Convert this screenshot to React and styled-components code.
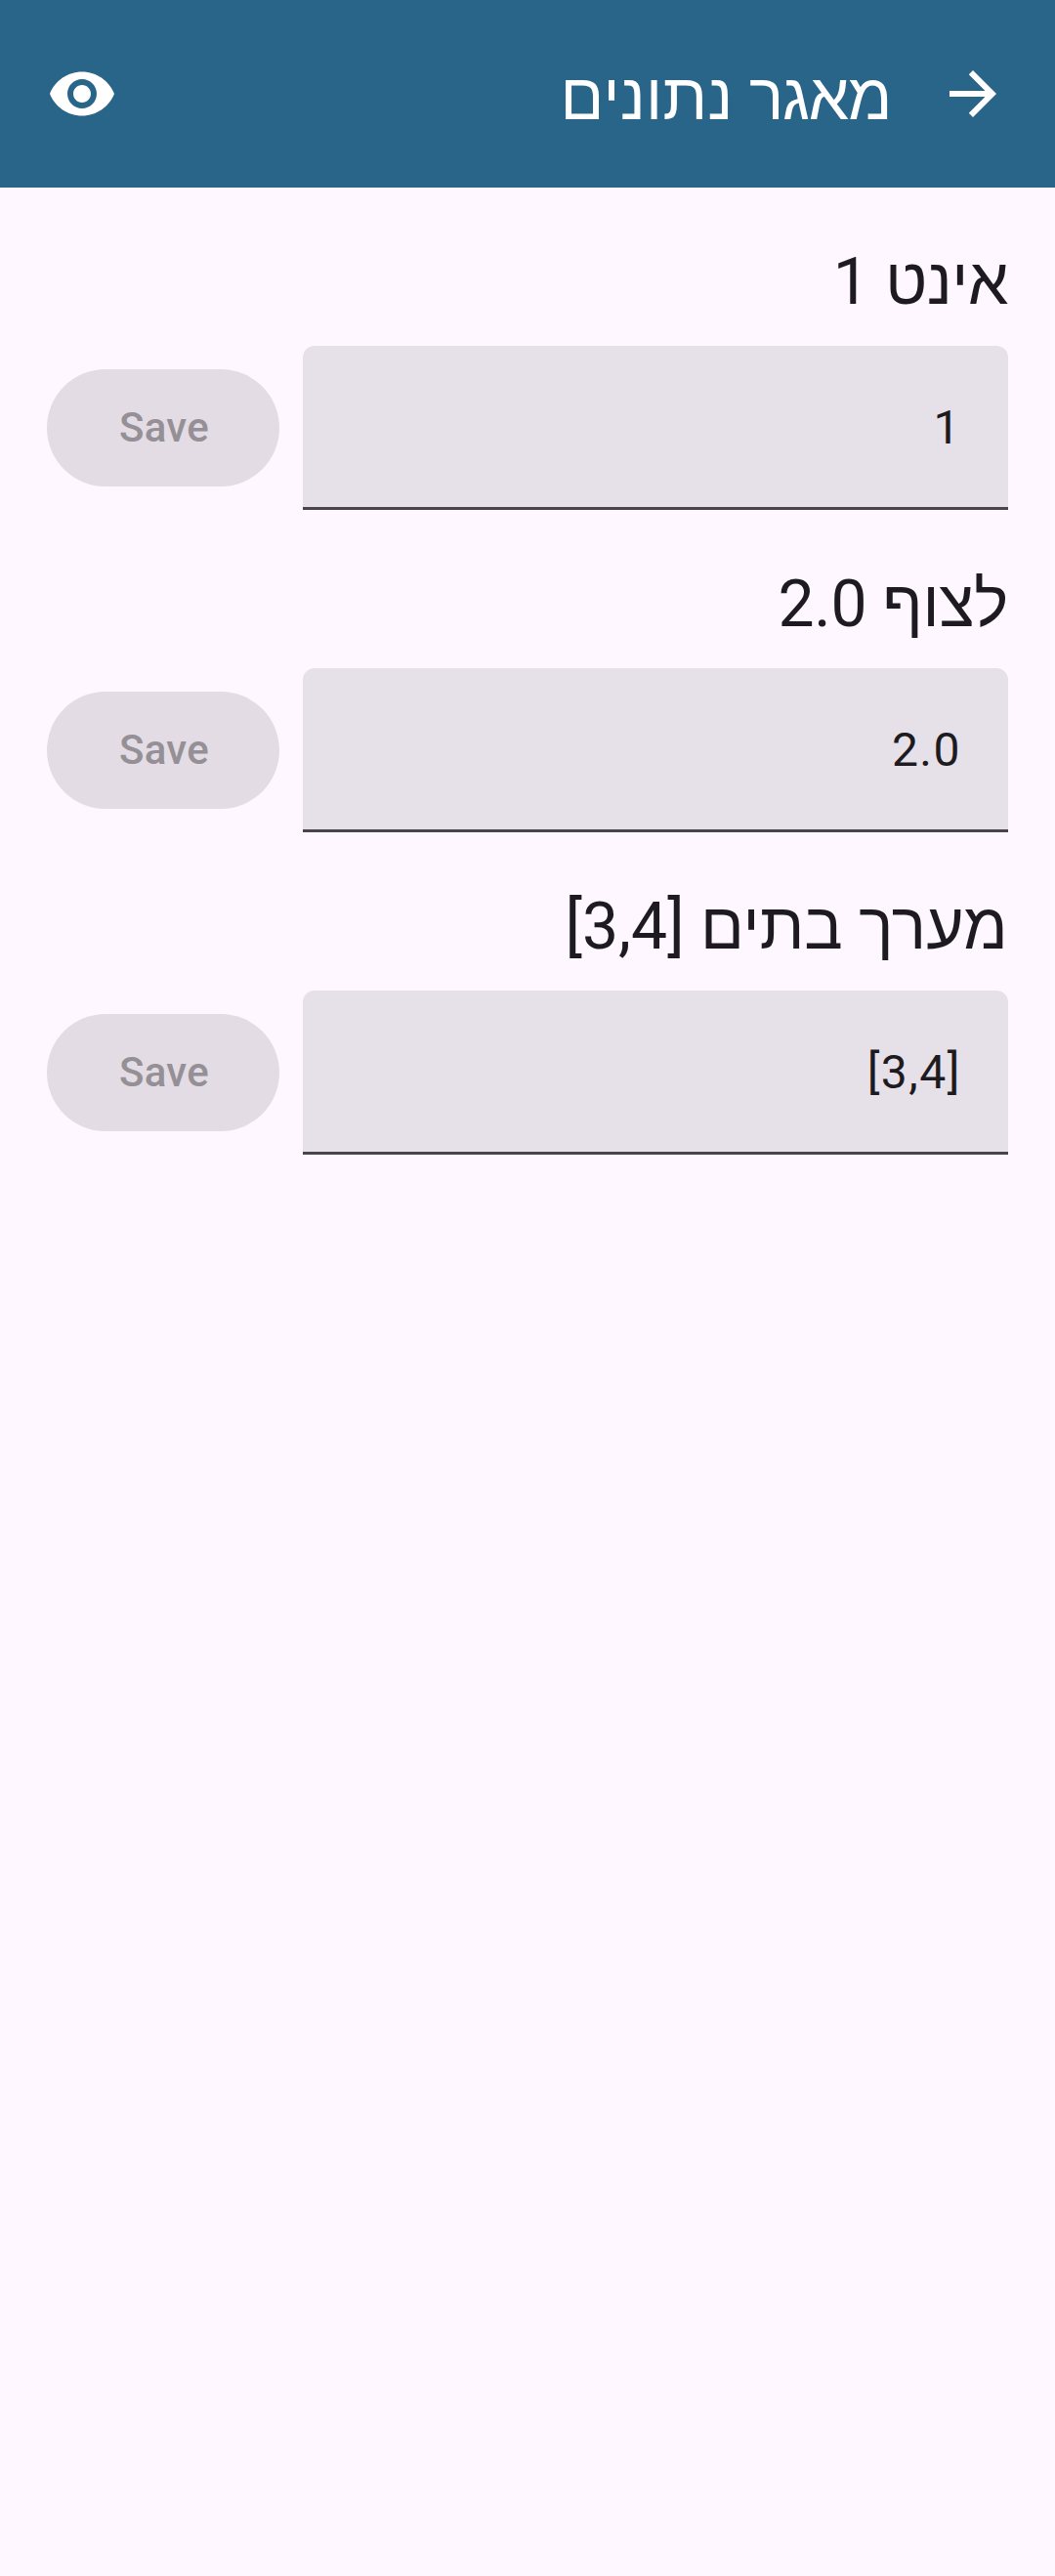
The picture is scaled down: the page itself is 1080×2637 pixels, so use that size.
import React from "react";
import styled, { createGlobalStyle } from "styled-components";

const GlobalStyle = createGlobalStyle`
  *, *::before, *::after { box-sizing: border-box; }
  body { margin: 0; background: #fef7ff; }
`;

const Screen = styled.div`
  direction: rtl;
  min-height: 2637px;
  background: #fef7ff;
  color: #1d1b20;
  font-family: Roboto, "Liberation Sans", sans-serif;
`;

const TopBar = styled.header`
  display: flex;
  align-items: center;
  height: 192px;
  padding: 0 48px;
  background: #296588;
  color: #fff;
`;

const IconButton = styled.button`
  display: flex;
  flex: none;
  padding: 0;
  border: 0;
  background: none;
  color: inherit;

  svg {
    width: 72px;
    height: 72px;
    fill: currentColor;
  }
`;

const Title = styled.h1`
  flex: 1;
  margin: 0;
  padding: 8px 48px 0 0;
  font-size: 66px;
  font-weight: 400;
  line-height: 84px;
`;

const Word = styled.span`
  letter-spacing: ${(p) => p.$tracking}px;
`;

const Content = styled.main`
  display: flex;
  flex-direction: column;
  gap: 48px;
  padding: 48px;
`;

const Entry = styled.section`
  display: flex;
  flex-direction: column;
  gap: 16px;
`;

const Label = styled.label`
  font-size: 66px;
  line-height: 98px;
`;

const FieldRow = styled.div`
  display: flex;
  align-items: center;
  gap: 24px;
`;

const Field = styled.input`
  flex: 1;
  min-width: 0;
  height: 168px;
  padding: 1px 48px 0;
  border: 0;
  border-bottom: 3px solid #49454f;
  border-radius: 12px 12px 0 0;
  outline: 0;
  background: #e6e0e9;
  color: #1d1b20;
  font: 400 48px/72px Roboto, "Liberation Sans", sans-serif;
  letter-spacing: 1.5px;
`;

const SaveButton = styled.button`
  width: 238px;
  height: 120px;
  padding: 0 0 0 2px;
  border: 0;
  border-radius: 60px;
  background: #e3dce4;
  color: #949096;
  font: 500 42px/60px Roboto, sans-serif;
  letter-spacing: 0.3px;
`;

const titleWords = [
  { text: "מאגר", tracking: -1.25 },
  { text: "נתונים", tracking: 0.4 },
];

const entries = [
  {
    id: "int",
    words: [{ text: "אינט", tracking: -0.4 }, { text: "1" }],
    value: "1",
  },
  {
    id: "float",
    words: [{ text: "לצוף", tracking: -0.2 }, { text: "2.0", tracking: -0.3 }],
    value: "2.0",
  },
  {
    id: "bytes",
    words: [{ text: "מערך", tracking: 0.3 }, { text: "בתים" }, { text: "[3,4]" }],
    value: "[3,4]",
  },
];

function Words({ items }) {
  return items.map(({ text, tracking = 0 }, i) => (
    <React.Fragment key={text}>
      {i > 0 && " "}
      <Word $tracking={tracking}>{text}</Word>
    </React.Fragment>
  ));
}

export default function App() {
  return (
    <Screen lang="he">
      <GlobalStyle />
      <TopBar>
        <IconButton>
          <svg viewBox="0 0 24 24">
            <path d="M12 4l-1.41 1.41L16.17 11H4v2h12.17l-5.58 5.59L12 20l8-8z" />
          </svg>
        </IconButton>
        <Title>
          <Words items={titleWords} />
        </Title>
        <IconButton>
          <svg viewBox="0 0 24 24">
            <path d="M12 4.5C7 4.5 2.73 7.61 1 12c1.73 4.39 6 7.5 11 7.5s9.27-3.11 11-7.5c-1.73-4.39-6-7.5-11-7.5zM12 17c-2.76 0-5-2.24-5-5s2.24-5 5-5 5 2.24 5 5-2.24 5-5 5zm0-8c-1.66 0-3 1.34-3 3s1.34 3 3 3 3-1.34 3-3-1.34-3-3-3z" />
          </svg>
        </IconButton>
      </TopBar>
      <Content>
        {entries.map((entry) => (
          <Entry key={entry.id}>
            <Label htmlFor={entry.id}>
              <Words items={entry.words} />
            </Label>
            <FieldRow>
              <Field id={entry.id} defaultValue={entry.value} />
              <SaveButton disabled>Save</SaveButton>
            </FieldRow>
          </Entry>
        ))}
      </Content>
    </Screen>
  );
}
